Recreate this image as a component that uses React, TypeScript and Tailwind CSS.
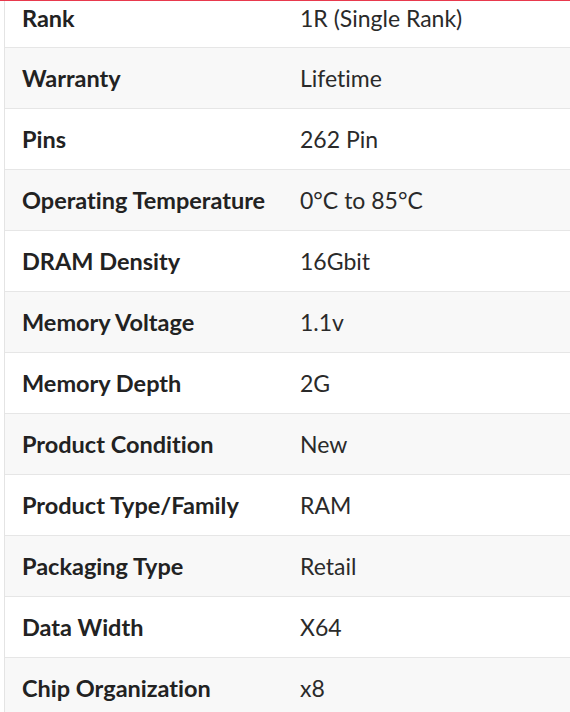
const specs: [string, string][] = [
  ["Rank", "1R (Single Rank)"],
  ["Warranty", "Lifetime"],
  ["Pins", "262 Pin"],
  ["Operating Temperature", "0°C to 85°C"],
  ["DRAM Density", "16Gbit"],
  ["Memory Voltage", "1.1v"],
  ["Memory Depth", "2G"],
  ["Product Condition", "New"],
  ["Product Type/Family", "RAM"],
  ["Packaging Type", "Retail"],
  ["Data Width", "X64"],
  ["Chip Organization", "x8"],
];

export default function App() {
  return (
    <div className="w-[570px] h-[712px] overflow-hidden bg-white font-['Lato',sans-serif] [font-variant-ligatures:none]">
      {/* tab underline */}
      <div className="h-px bg-[#e8394d]" />
      <div className="ml-[4px] w-[600px] border-l border-[#e4e4e4]">
        {specs.map(([label, value], i) => (
          <div
            key={label}
            className={`grid grid-cols-[273px_1fr] items-center border-b border-[#e6e6e6] leading-[30px] ${
              i === 0 ? "h-[47px] pb-[12px]" : "h-[61px]"
            } ${i % 2 === 1 ? "bg-[#f8f8f8]" : "bg-white"}`}
          >
            <div className="pl-[17px] text-[23.5px] font-bold text-[#222]">{label}</div>
            <div className="pl-[22px] text-[23px] text-[#2a2a2a]">{value}</div>
          </div>
        ))}
      </div>
    </div>
  );
}
